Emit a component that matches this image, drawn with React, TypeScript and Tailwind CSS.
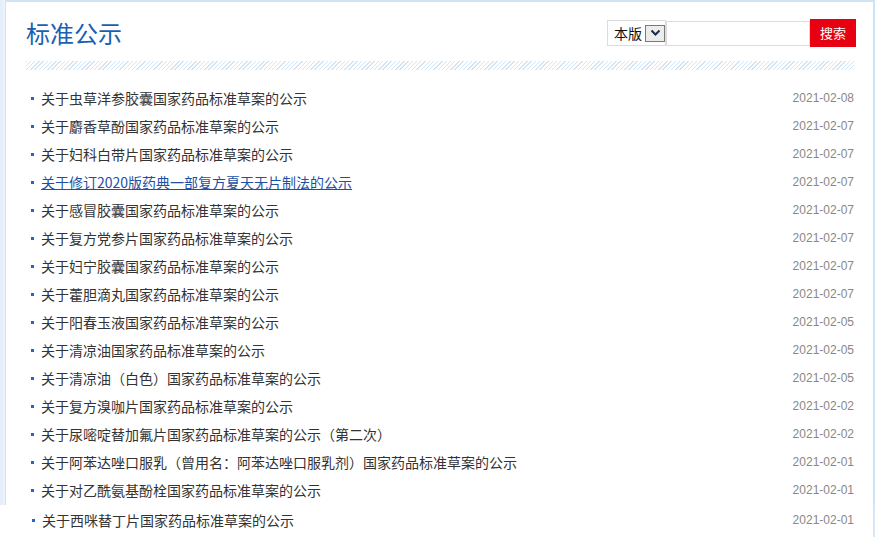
import React from 'react';

const items: { title: string; date: string; link?: boolean }[] = [
  { title: '关于虫草洋参胶囊国家药品标准草案的公示', date: '2021-02-08' },
  { title: '关于麝香草酚国家药品标准草案的公示', date: '2021-02-07' },
  { title: '关于妇科白带片国家药品标准草案的公示', date: '2021-02-07' },
  { title: '关于修订2020版药典一部复方夏天无片制法的公示', date: '2021-02-07', link: true },
  { title: '关于感冒胶囊国家药品标准草案的公示', date: '2021-02-07' },
  { title: '关于复方党参片国家药品标准草案的公示', date: '2021-02-07' },
  { title: '关于妇宁胶囊国家药品标准草案的公示', date: '2021-02-07' },
  { title: '关于藿胆滴丸国家药品标准草案的公示', date: '2021-02-07' },
  { title: '关于阳春玉液国家药品标准草案的公示', date: '2021-02-05' },
  { title: '关于清凉油国家药品标准草案的公示', date: '2021-02-05' },
  { title: '关于清凉油（白色）国家药品标准草案的公示', date: '2021-02-05' },
  { title: '关于复方溴咖片国家药品标准草案的公示', date: '2021-02-02' },
  { title: '关于尿嘧啶替加氟片国家药品标准草案的公示（第二次）', date: '2021-02-02' },
  { title: '关于阿苯达唑口服乳（曾用名：阿苯达唑口服乳剂）国家药品标准草案的公示', date: '2021-02-01' },
  { title: '关于对乙酰氨基酚栓国家药品标准草案的公示', date: '2021-02-01' },
];

const cjk = { fontFamily: '"Noto Sans CJK SC", "Liberation Sans", sans-serif' };
const latin = { fontFamily: '"Liberation Sans", Arial, sans-serif' };

function Row({ title, date, link }: { title: string; date: string; link?: boolean }) {
  return (
    <div className="h-[28px] flex items-center justify-between">
      <div className="flex items-center">
        <span className="ml-[5px] w-[3px] h-[3px] bg-[#1f66c8]" />
        <a
          href="#"
          style={cjk}
          className={
            link
              ? 'ml-[7px] text-[14px] leading-[28px] text-[#1d4fa3] underline'
              : 'ml-[7px] text-[14px] leading-[28px] text-[#333]'
          }
        >
          {title}
        </a>
      </div>
      <span style={latin} className="text-[12px] text-[#888]">
        {date}
      </span>
    </div>
  );
}

export default function App() {
  return (
    <div className="w-[877px] h-[550px] bg-white overflow-hidden">
      <div className="flex">
        {/* left edge */}
        <div className="w-[6px] h-[505px] bg-gradient-to-r from-[#e3eefa] to-[#edf4fb] border-r border-[#d3e3f3]" />

        {/* Panel */}
        <div className="w-[869px] h-[505px] border-t-2 border-r-2 border-[#d0e3f4]">
          {/* Header */}
          <div className="mt-[17px] h-[28px] pl-[20px] pr-[17px] flex items-center justify-between">
            <h1 style={cjk} className="text-[24px] leading-[28px] text-[#1a5fb4] font-normal">
              标准公示
            </h1>
            <div className="flex items-center">
              <div className="h-[26px] w-[59px] border border-[#dcdcdc] flex items-center pl-[6px] bg-white">
                <span style={cjk} className="text-[14px] text-[#111]">本版</span>
                <span className="ml-[3px] w-[20px] h-[17px] border border-[#7a7a7a] bg-[#ececec] flex items-center justify-center">
                  <svg width="11" height="8" viewBox="0 0 11 8">
                    <path d="M1.5 1.5 L5.5 5.5 L9.5 1.5" fill="none" stroke="#1b2a4a" strokeWidth="2" />
                  </svg>
                </span>
              </div>
              <div className="h-[25px] w-[144px] border border-[#dcdcdc] bg-white" />
              <button
                style={cjk}
                className="h-[28px] w-[46px] bg-[#e60012] text-white text-[13px] flex items-center justify-center"
              >
                搜索
              </button>
            </div>
          </div>

          {/* hatched stripe */}
          <div className="mt-[14px] ml-[20px] mr-[19px] h-[9px] bg-[repeating-linear-gradient(135deg,#d3e5f5_0px,#d3e5f5_1px,transparent_1px,transparent_3px)]" />

          {/* list */}
          <div className="mt-[14px] pl-[20px] pr-[19px]">
            {items.map((it) => (
              <Row key={it.title} {...it} />
            ))}
          </div>
        </div>
      </div>

      {/* last row, below the panel */}
      <div className="w-[875px] h-[32px] border-r-2 border-[#d8e7f5] pt-[1px]">
        <div className="pl-[27px] pr-[19px]">
          <Row title="关于西咪替丁片国家药品标准草案的公示" date="2021-02-01" />
        </div>
      </div>
    </div>
  );
}
